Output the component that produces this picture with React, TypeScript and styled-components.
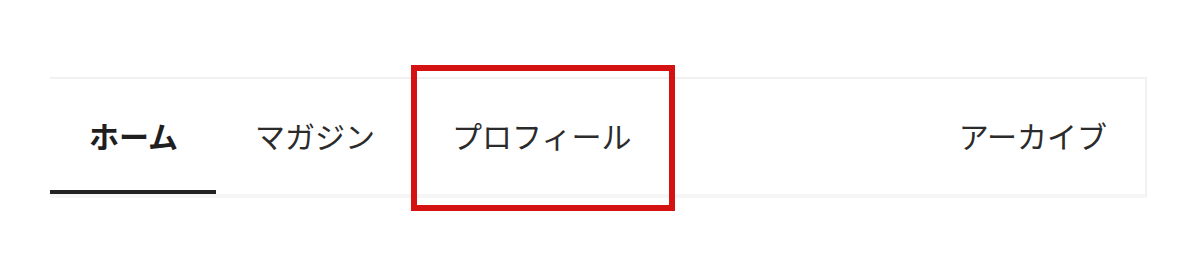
import React from 'react'
import styled, { createGlobalStyle } from 'styled-components'

const GlobalStyle = createGlobalStyle`
  html, body {
    margin: 0;
    padding: 0;
    background: #fff;
    font-family: "Noto Sans CJK JP", "Noto Sans", sans-serif;
  }
`

const Page = styled.div`
  width: 1200px;
  height: 272px;
  padding: 77px 53px 0 50px;
  box-sizing: border-box;
`

const TabBar = styled.nav`
  display: flex;
  align-items: stretch;
  height: 121px;
  box-sizing: border-box;
  border-top: 2px solid #f1f1f1;
  border-right: 2px solid #f1f1f1;
  border-bottom: 4px solid #f6f6f6;
  background: #fff;
`

const Tab = styled.a<{ active?: boolean; highlighted?: boolean; pushRight?: boolean }>`
  position: relative;
  display: flex;
  align-items: center;
  padding: 0 38px 0 39px;
  margin-left: ${(props) => (props.pushRight ? 'auto' : '0')};
  font-size: 30px;
  line-height: 1;
  font-weight: ${(props) => (props.active ? 700 : 400)};
  color: ${(props) => (props.active ? '#1f1f1f' : '#2b2b2b')};
  text-decoration: none;
  white-space: nowrap;
  box-sizing: border-box;
  border-bottom: 4px solid ${(props) => (props.active ? '#222' : 'transparent')};

  ${(props) =>
    props.highlighted &&
    `
    &::after {
      content: '';
      position: absolute;
      left: -2px;
      right: -5px;
      top: -14px;
      bottom: -21px;
      border: 6px solid #d41212;
      pointer-events: none;
    }
  `}
`

const tabs = [
  { label: 'ホーム', active: true },
  { label: 'マガジン' },
  { label: 'プロフィール', highlighted: true },
  { label: 'アーカイブ', pushRight: true },
]

export default function App() {
  return (
    <>
      <GlobalStyle />
      <Page>
        <TabBar>
          {tabs.map((t) => (
            <Tab key={t.label} active={t.active} highlighted={t.highlighted} pushRight={t.pushRight}>
              {t.label}
            </Tab>
          ))}
        </TabBar>
      </Page>
    </>
  )
}
